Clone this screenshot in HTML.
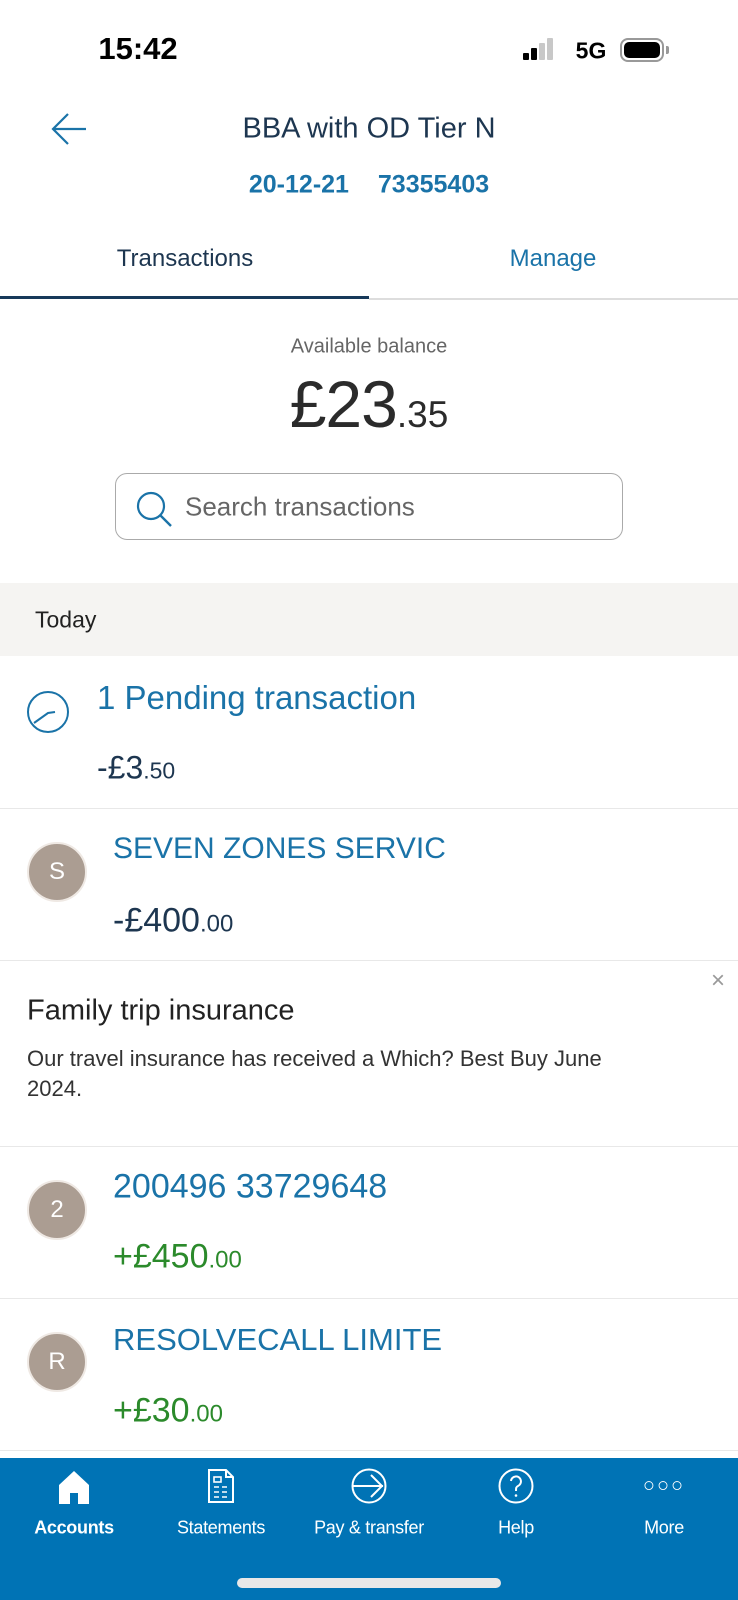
<!DOCTYPE html>
<html><head><meta charset="utf-8"><style>
*{margin:0;padding:0;box-sizing:border-box}
body{width:738px;height:1600px;position:relative;background:#fff;font-family:"Liberation Sans",sans-serif;overflow:hidden}
.a{position:absolute;white-space:nowrap}
.c{transform:translate(-50%,-50%)}
.v{transform:translateY(-50%)}
.blue{color:#1a73a8}
.navy{color:#1d3650}
.hr{position:absolute;left:0;width:738px;height:1px;background:#e8e8e8}
.av{position:absolute;width:60px;height:60px;border-radius:50%;background:#ab9d92;color:#fff;font-size:24px;display:flex;align-items:center;justify-content:center;border:2px solid #efe9e4}
.nl{position:absolute;top:1528px;color:#fff;font-size:18px;transform:translate(-50%,-50%);white-space:nowrap;letter-spacing:-0.3px}
</style></head><body>
<div class="a c" style="left:138px;top:49px;font-size:31px;font-weight:bold;color:#000">15:42</div>
<div style="position:absolute;left:523px;top:53px;width:6px;height:7px;background:#000;border-radius:1px"></div>
<div style="position:absolute;left:531px;top:48px;width:6px;height:12px;background:#000;border-radius:1px"></div>
<div style="position:absolute;left:539px;top:43px;width:6px;height:17px;background:#c8c8c8;border-radius:1px"></div>
<div style="position:absolute;left:547px;top:38px;width:6px;height:22px;background:#c8c8c8;border-radius:1px"></div>
<div class="a c" style="left:591px;top:51px;font-size:23px;font-weight:bold;color:#000">5G</div>
<div style="position:absolute;left:620px;top:38px;width:44px;height:24px;border:2px solid #999;border-radius:8px;padding:2px"><div style="width:100%;height:100%;background:#000;border-radius:5px"></div></div>
<div style="position:absolute;left:666px;top:46px;width:3px;height:8px;background:#999;border-radius:0 2px 2px 0"></div>

<svg class="a" style="left:50px;top:112px" width="38" height="34" viewBox="0 0 38 34"><path d="M36 17H3M18 2L3 17l15 15" fill="none" stroke="#1a73a8" stroke-width="2.2"/></svg>
<div class="a c navy" style="left:369px;top:129px;font-size:29px">BBA with OD Tier N</div>
<div class="a c blue" style="left:369px;top:185px;font-size:25px;font-weight:bold;word-spacing:22px">20-12-21 73355403</div>
<div class="a c navy" style="left:185px;top:259px;font-size:24px">Transactions</div>
<div class="a c blue" style="left:553px;top:259px;font-size:24px">Manage</div>
<div style="position:absolute;left:0;top:296px;width:369px;height:3px;background:#17395a"></div>
<div style="position:absolute;left:369px;top:298px;width:369px;height:2px;background:#ddd"></div>

<div class="a c" style="left:369px;top:347px;font-size:20px;color:#666">Available balance</div>
<div class="a c" style="left:369px;top:404px;font-size:66px;color:#2b2b2b;letter-spacing:-1px">£23<span style="font-size:37px;letter-spacing:0">.35</span></div>
<div style="position:absolute;left:115px;top:473px;width:508px;height:67px;border:1.5px solid #aaa;border-radius:12px"></div>
<svg class="a" style="left:134px;top:489px" width="40" height="40" viewBox="0 0 40 40"><circle cx="17" cy="17" r="13" fill="none" stroke="#1a73a8" stroke-width="2.2"/><path d="M26.5 26.5L37 37" stroke="#1a73a8" stroke-width="2.4"/></svg>
<div class="a v" style="left:185px;top:507px;font-size:26px;color:#666">Search transactions</div>

<div style="position:absolute;left:0;top:583px;width:738px;height:73px;background:#f5f4f2"></div>
<div class="a v" style="left:35px;top:620px;font-size:23px;color:#222">Today</div>

<svg class="a" style="left:26px;top:690px" width="44" height="44" viewBox="0 0 44 44"><circle cx="22" cy="22" r="20" fill="none" stroke="#1a73a8" stroke-width="2"/><path d="M8 33L22 23l7-1" fill="none" stroke="#1a73a8" stroke-width="2"/></svg>
<div class="a v blue" style="left:97px;top:698px;font-size:33px">1 Pending transaction</div>
<div class="a v navy" style="left:97px;top:768px;font-size:32px">-£3<span style="font-size:23px">.50</span></div>
<div class="hr" style="top:808px"></div>

<div class="av" style="left:27px;top:842px">S</div>
<div class="a v blue" style="left:113px;top:849px;font-size:30px">SEVEN ZONES SERVIC</div>
<div class="a v navy" style="left:113px;top:921px;font-size:34px">-£400<span style="font-size:24px">.00</span></div>
<div class="hr" style="top:960px"></div>

<div class="a c" style="left:718px;top:981px;font-size:24px;color:#999">×</div>
<div class="a v" style="left:27px;top:1011px;font-size:29px;color:#222">Family trip insurance</div>
<div class="a" style="left:27px;top:1044px;font-size:22px;color:#333;line-height:30px;white-space:normal;width:600px">Our travel insurance has received a Which? Best Buy June 2024.</div>
<div class="hr" style="top:1146px"></div>

<div class="av" style="left:27px;top:1180px">2</div>
<div class="a v blue" style="left:113px;top:1187px;font-size:34px">200496 33729648</div>
<div class="a v" style="left:113px;top:1257px;font-size:34px;color:#2b8a2b">+£450<span style="font-size:24px">.00</span></div>
<div class="hr" style="top:1298px"></div>

<div class="av" style="left:27px;top:1332px">R</div>
<div class="a v blue" style="left:113px;top:1340px;font-size:31px">RESOLVECALL LIMITE</div>
<div class="a v" style="left:113px;top:1411px;font-size:34px;color:#2b8a2b">+£30<span style="font-size:24px">.00</span></div>
<div class="hr" style="top:1450px"></div>

<div style="position:absolute;left:0;top:1458px;width:738px;height:142px;background:#0073b5"></div>
<svg class="a" style="left:57px;top:1470px" width="34" height="34" viewBox="0 0 34 34"><path d="M2 15L17 1l15 14v19H21V23h-8v11H2z" fill="#fff"/></svg>
<svg class="a" style="left:207px;top:1468px" width="28" height="36" viewBox="0 0 28 36"><path d="M2 2h17l7 7v25H2z M19 2v7h7" fill="none" stroke="#fff" stroke-width="2"/><rect x="7" y="9" width="7" height="5" fill="none" stroke="#fff" stroke-width="1.6"/><path d="M7 19h5M15 19h5M7 24h5M15 24h5M7 29h5M15 29h5" stroke="#fff" stroke-width="1.6"/></svg>
<svg class="a" style="left:351px;top:1468px" width="36" height="36" viewBox="0 0 36 36"><circle cx="18" cy="18" r="16.5" fill="none" stroke="#fff" stroke-width="2"/><path d="M2 18h30M20 7l11 11-11 11" fill="none" stroke="#fff" stroke-width="2"/></svg>
<svg class="a" style="left:498px;top:1468px" width="36" height="36" viewBox="0 0 36 36"><circle cx="18" cy="18" r="16.5" fill="none" stroke="#fff" stroke-width="2"/><path d="M13 13a5 5 0 1 1 7 5c-2 1-2 2-2 5" fill="none" stroke="#fff" stroke-width="2"/><circle cx="18" cy="27.5" r="1.3" fill="#fff"/></svg>
<div class="a c" style="left:664px;top:1486px;font-size:20px;color:#fff;letter-spacing:2px;font-weight:bold">○○○</div>
<div class="nl" style="left:74px;font-weight:bold">Accounts</div>
<div class="nl" style="left:221px">Statements</div>
<div class="nl" style="left:369px">Pay &amp; transfer</div>
<div class="nl" style="left:516px">Help</div>
<div class="nl" style="left:664px">More</div>
<div style="position:absolute;left:237px;top:1578px;width:264px;height:10px;border-radius:5px;background:#e8e8e8"></div>
</body></html>
